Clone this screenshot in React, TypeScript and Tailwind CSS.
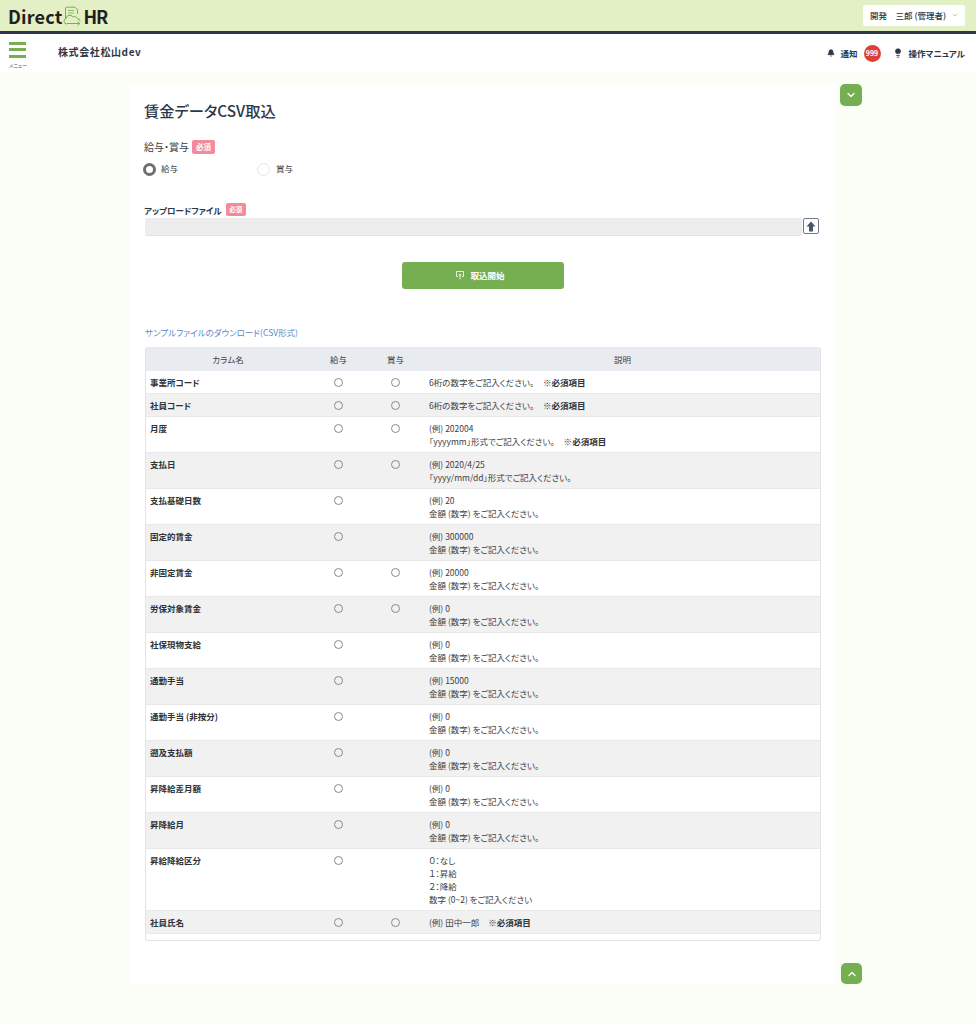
import { ChevronDown, ChevronUp, Bell, Lightbulb } from "lucide-react";

type Row = {
  name: string;
  salary: boolean;
  bonus: boolean;
  lines: string[];
  required?: boolean;
};

const amount = "金額 (数字) をご記入ください。";

const rows: Row[] = [
  { name: "事業所コード", salary: true, bonus: true, lines: ["6桁の数字をご記入ください。"], required: true },
  { name: "社員コード", salary: true, bonus: true, lines: ["6桁の数字をご記入ください。"], required: true },
  { name: "月度", salary: true, bonus: true, lines: ["(例) 202004", "「yyyymm」形式でご記入ください。"], required: true },
  { name: "支払日", salary: true, bonus: true, lines: ["(例) 2020/4/25", "「yyyy/mm/dd」形式でご記入ください。"] },
  { name: "支払基礎日数", salary: true, bonus: false, lines: ["(例) 20", amount] },
  { name: "固定的賃金", salary: true, bonus: false, lines: ["(例) 300000", amount] },
  { name: "非固定賃金", salary: true, bonus: true, lines: ["(例) 20000", amount] },
  { name: "労保対象賃金", salary: true, bonus: true, lines: ["(例) 0", amount] },
  { name: "社保現物支給", salary: true, bonus: false, lines: ["(例) 0", amount] },
  { name: "通勤手当", salary: true, bonus: false, lines: ["(例) 15000", amount] },
  { name: "通勤手当 (非按分)", salary: true, bonus: false, lines: ["(例) 0", amount] },
  { name: "遡及支払額", salary: true, bonus: false, lines: ["(例) 0", amount] },
  { name: "昇降給差月額", salary: true, bonus: false, lines: ["(例) 0", amount] },
  { name: "昇降給月", salary: true, bonus: false, lines: ["(例) 0", amount] },
  { name: "昇給降給区分", salary: true, bonus: false, lines: ["０：なし", "１：昇給", "２：降給", "数字 (0~2) をご記入ください"] },
  { name: "社員氏名", salary: true, bonus: true, lines: ["(例) 田中一郎"], required: true },
];

// 必須バッジ
function RequiredBadge() {
  return (
    <span className="inline-flex h-[14px] w-[23px] items-center justify-center rounded-[2px] bg-[#f38b9c] text-[7.500px] font-bold leading-none text-white">
      必須
    </span>
  );
}

function Circle() {
  return <span className="mx-auto block h-[9px] w-[9px] rounded-full border border-[#8a8a8a] bg-transparent" />;
}

function Logo() {
  return (
    <div className="flex items-center text-[18px] font-bold leading-none tracking-[0.2px] text-[#231f20]">
      <span>Direct</span>
      <svg width="20" height="20" viewBox="0 0 20 20" fill="none" stroke="#76ae52" strokeWidth="1" className="ml-[1px]">
        <path d="M2.500 13V2.200a1 1 0 0 1 1-1h8.500l2.500 2.500V8" />
        <path d="M5 4.500h6M5 7h6M5 9.500h3" strokeWidth="0.8" />
        <path d="M4 18h-.5a2.800 2.800 0 0 1-.4-5.500A3.600 3.600 0 0 1 9.800 11a3 3 0 0 1 4.500 1.600 2.600 2.600 0 0 1 2.700 2.600" />
        <path d="M4 17.500h12.500M14.500 15.500l2.300 2-2.300 2" />
      </svg>
      <span className="tracking-[-1.200px]">HR</span>
    </div>
  );
}

export default function App() {
  return (
    <div
      className="min-h-[1024px] bg-[#fbfef6] text-[#3d4043] [font-feature-settings:'palt']"
      style={{ fontFamily: '"Noto Sans CJK JP", "Noto Sans", sans-serif' }}
    >
      {/* ヘッダー */}
      <header className="flex h-[34px] items-center justify-between border-b-[3px] border-[#2d3748] bg-[#e3f0c6] pl-[8px] pr-[11px]">
        <Logo />
        <div className="mt-[-1px] flex h-[21px] w-[102px] items-center justify-between rounded-[2px] bg-white pl-[7px] pr-[6px] text-[8.500px] font-medium text-[#2d3748]">
          <span className="whitespace-pre">開発　三郎 (管理者)</span>
          <ChevronDown size={8} strokeWidth={2} color="#8bbd6b" />
        </div>
      </header>

      {/* ナビ */}
      <nav className="flex h-[38px] items-center justify-between bg-white pr-[11px]">
        <div className="flex items-center">
          <div className="ml-[9px] flex w-[19px] flex-col items-start pt-[3px]">
            <div className="h-[3px] w-[17px] bg-[#76ae52]" />
            <div className="mt-[3.500px] h-[3px] w-[17px] bg-[#76ae52]" />
            <div className="mt-[3.500px] h-[3px] w-[17px] bg-[#76ae52]" />
            <span className="mt-[3px] whitespace-nowrap text-[5px] leading-[7px] text-[#555]">メニュー</span>
          </div>
          <span className="ml-[30px] mt-[-3px] text-[10px] font-bold tracking-[0.6px] text-[#2d3748]">株式会社松山dev</span>
        </div>
        <div className="flex items-center text-[8.500px] font-bold text-[#2d3748]">
          <Bell size={8} fill="#2d3748" strokeWidth={2} />
          <span className="ml-[6px]">通知</span>
          <span className="ml-[6px] flex h-[17px] w-[17px] items-center justify-center rounded-full bg-[#dc4035] text-[7px] font-bold text-white">999</span>
          <Lightbulb size={10} fill="#2d3748" strokeWidth={2} className="ml-[12px]" />
          <span className="ml-[6px]">操作マニュアル</span>
        </div>
      </nav>

      {/* 本体 */}
      <div className="relative ml-[130px] mt-[12px] h-[900px] w-[706px] bg-white px-[15px] pt-[15px]">
        <button className="absolute right-[-26px] top-0 flex h-[22px] w-[22px] items-center justify-center rounded-[5px] bg-[#76ae52]">
          <ChevronDown size={12} strokeWidth={2.500} color="#fff" />
        </button>
        <button className="absolute bottom-0 right-[-26px] flex h-[21px] w-[21px] items-center justify-center rounded-[5px] bg-[#76ae52]">
          <ChevronUp size={12} strokeWidth={2.500} color="#fff" />
        </button>

        <h1 className="ml-[-1px] text-[15.300px] font-medium leading-[22px] text-[#2d3748]">賃金データCSV取込</h1>

        <div className="ml-[-1px] mt-[19px] flex items-center gap-[3px] text-[10px] leading-[14px]">
          <span>給与・賞与</span>
          <RequiredBadge />
        </div>
        <div className="mt-[9px] flex items-center text-[8.500px] leading-[12px]">
          <span className="ml-[-2px] h-[13px] w-[13px] rounded-full border-[3.500px] border-[#6e6e6e] bg-white" />
          <span className="ml-[5px] mt-[-4px] w-[96px]">給与</span>
          <span className="h-[13px] w-[13px] rounded-full border border-[#e6e6e6] bg-white" />
          <span className="ml-[6px] mt-[-4px]">賞与</span>
        </div>

        <div className="ml-[-1px] mt-[27px] flex items-center gap-[4px] text-[8.500px] font-bold leading-[12px] text-[#2d3748]">
          <span>アップロードファイル</span>
          <span className="inline-flex h-[13px] w-[20px] items-center justify-center rounded-[2px] bg-[#f38b9c] text-[6.500px] leading-none text-white">必須</span>
        </div>
        <div className="mt-[2px] flex items-start">
          <div className="h-[18px] w-[657px] rounded-[2px] border-b border-[#e2e2e2] bg-[#ededed]" />
          <div className="ml-[1px] flex h-[16px] w-[16px] items-center justify-center rounded-[2px] border border-[#6b7a90] bg-white">
            <svg width="10" height="11" viewBox="0 0 10 11" fill="#4a5568">
              <path d="M5 0.500L9.500 5.500H7V10.500H3V5.500H0.500Z" />
            </svg>
          </div>
        </div>

        <button className="mx-auto mt-[26px] flex h-[27px] w-[162px] items-center justify-center rounded-[3px] bg-[#76ae52] pr-[5px] text-[8.500px] font-bold text-white">
          <svg width="8" height="9" viewBox="0 0 8 9" fill="none" stroke="#fff" strokeWidth="0.8" className="mr-[6px]">
            <path d="M2 5.500H.5V.5h7v5H6M4 2.500v6M2.500 4h3" />
          </svg>
          取込開始
        </button>

        <a className="mt-[37px] block text-[8.500px] leading-[13px] text-[#5b8ac7]">サンプルファイルのダウンロード(CSV形式)</a>

        {/* カラム説明テーブル */}
        <div className="mt-[8px] h-[594px] w-[676px] overflow-hidden rounded-[3px] border border-[#e4e4e4] border-t-0">
          <table className="w-full table-fixed border-collapse text-[8.500px] leading-[13px]">
            <colgroup>
              <col className="w-[164px]" />
              <col className="w-[57px]" />
              <col className="w-[57px]" />
              <col />
            </colgroup>
            <thead>
              <tr className="h-[24px] bg-[#e8ebef] font-normal">
                <th className="font-normal">カラム名</th>
                <th className="font-normal">給与</th>
                <th className="font-normal">賞与</th>
                <th className="pl-[1px] font-normal">説明</th>
              </tr>
            </thead>
            <tbody>
              {rows.map((row, i) => (
                <tr key={row.name} className={`border-b border-[#e9e9e9] align-top ${i % 2 === 1 ? "bg-[#f1f1f1]" : "bg-white"}`}>
                  <td className="pb-[4px] pl-[4px] pt-[5px] font-bold text-[#2f3237]">{row.name}</td>
                  <td className="pb-[4px] pt-[5px]">
                    <div className="flex h-[13px] items-center">{row.salary && <Circle />}</div>
                  </td>
                  <td className="pb-[4px] pt-[5px]">
                    <div className="flex h-[13px] items-center">{row.bonus && <Circle />}</div>
                  </td>
                  <td className="pb-[4px] pl-[5px] pt-[5px]">
                    {row.lines.map((line, j) => (
                      <div key={j}>
                        {line}
                        {row.required && j === row.lines.length - 1 && (
                          <span className="ml-[9px]">
                            ※<b className="font-bold text-[#2f3237]">必須項目</b>
                          </span>
                        )}
                      </div>
                    ))}
                  </td>
                </tr>
              ))}
            </tbody>
          </table>
        </div>
      </div>
    </div>
  );
}
